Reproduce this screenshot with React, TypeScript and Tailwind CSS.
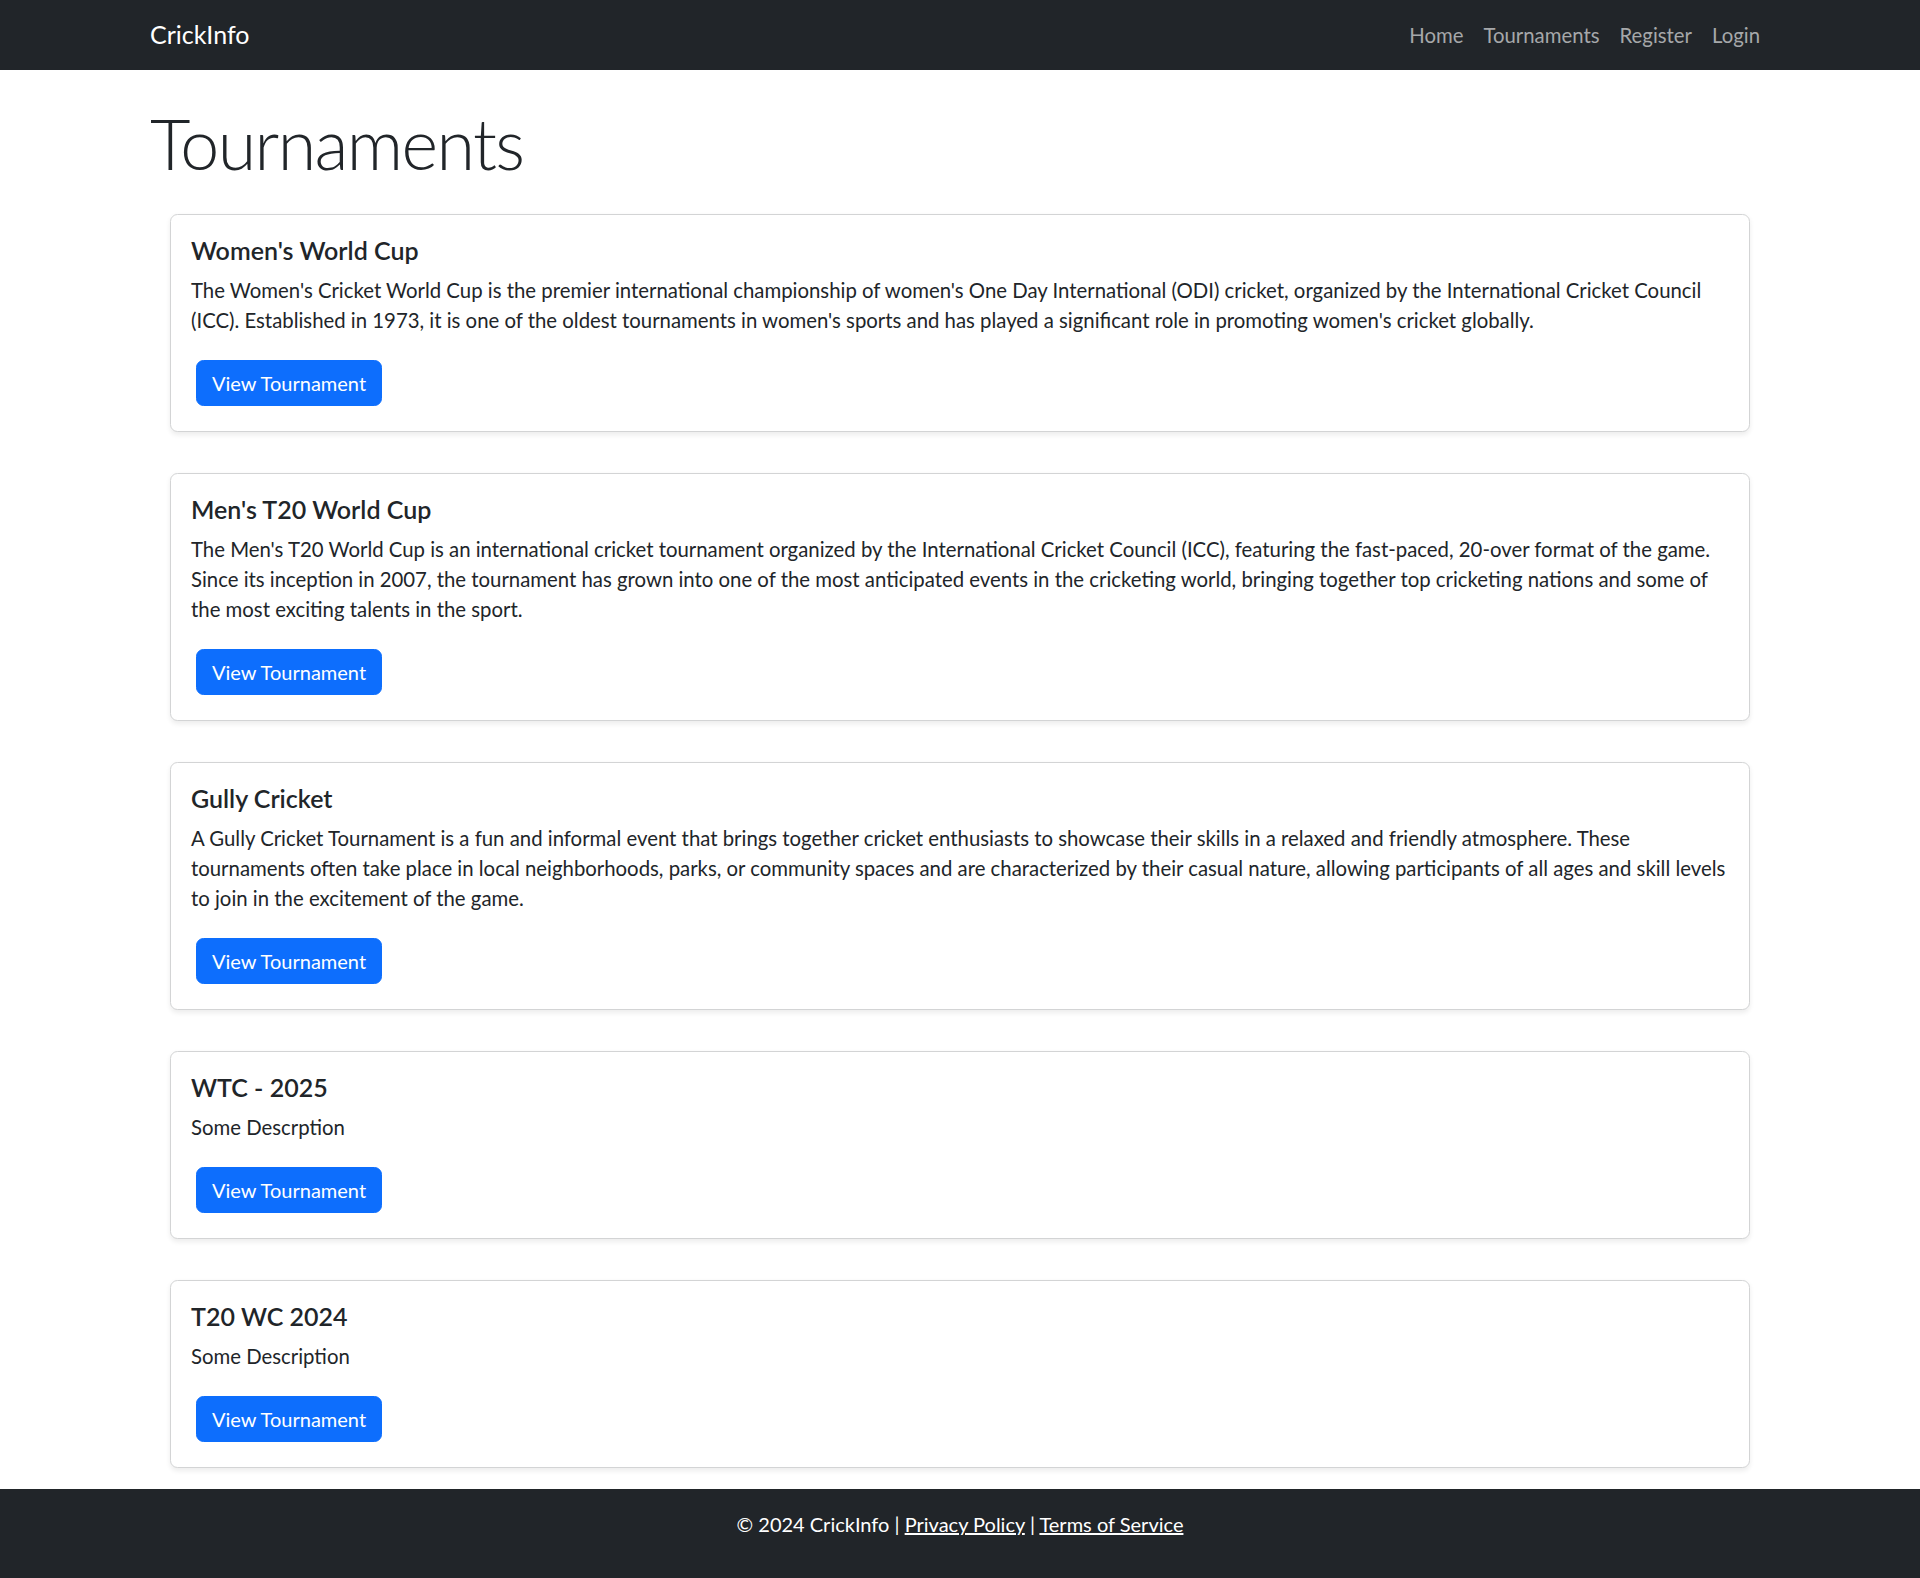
const tournaments = [
  {
    name: "Women's World Cup",
    description:
      "The Women's Cricket World Cup is the premier international championship of women's One Day International (ODI) cricket, organized by the International Cricket Council (ICC). Established in 1973, it is one of the oldest tournaments in women's sports and has played a significant role in promoting women's cricket globally.",
  },
  {
    name: "Men's T20 World Cup",
    description:
      "The Men's T20 World Cup is an international cricket tournament organized by the International Cricket Council (ICC), featuring the fast-paced, 20-over format of the game. Since its inception in 2007, the tournament has grown into one of the most anticipated events in the cricketing world, bringing together top cricketing nations and some of the most exciting talents in the sport.",
  },
  {
    name: 'Gully Cricket',
    description:
      'A Gully Cricket Tournament is a fun and informal event that brings together cricket enthusiasts to showcase their skills in a relaxed and friendly atmosphere. These tournaments often take place in local neighborhoods, parks, or community spaces and are characterized by their casual nature, allowing participants of all ages and skill levels to join in the excitement of the game.',
  },
  { name: 'WTC - 2025', description: 'Some Descrption' },
  { name: 'T20 WC 2024', description: 'Some Description' },
];

const navLinks = ['Home', 'Tournaments', 'Register', 'Login'];

const TournamentCard = ({ name, description }: { name: string; description: string }) => (
  <div className="bg-white border border-[#d3d4d5] rounded-[7.5px] shadow-[0_2.5px_5px_rgba(0,0,0,0.075)]">
    <div className="p-[20px]">
      <h5 className="text-[25px] leading-[30px] font-semibold mb-[10px]">{name}</h5>
      <p className="text-[20.35px] leading-[30px] mb-[20px]">{description}</p>
      <button className="m-[5px] bg-[#0d6efd] text-white text-[20px] leading-[30px] px-[15px] py-[7px] border border-[#0d6efd] rounded-[7.5px]">
        View Tournament
      </button>
    </div>
  </div>
);

export default function App() {
  return (
    <div className="min-h-screen flex flex-col bg-white text-[#212529] font-['Lato','Segoe_UI','Liberation_Sans',sans-serif]">
      <nav className="bg-[#212529] h-[70px]">
        <div className="w-[1650px] mx-auto px-[15px] h-full flex items-center justify-between">
          <a className="text-white text-[25px] leading-[37.5px]">CrickInfo</a>
          <ul className="flex">
            {navLinks.map((link) => (
              <li key={link}>
                <a className="block px-[10px] py-[10px] text-[20.35px] leading-[30px] text-[#a6a8aa]">{link}</a>
              </li>
            ))}
          </ul>
        </div>
      </nav>

      <main className="w-[1650px] mx-auto px-[15px] pt-[31px]">
        <h1 className="text-[70px] leading-[84px] font-light tracking-[-1.6px] mb-[29px]">Tournaments</h1>
        <div className="px-[20px] flex flex-col gap-[41px] pb-[21px]">
          {tournaments.map((t) => (
            <TournamentCard key={t.name} name={t.name} description={t.description} />
          ))}
        </div>
      </main>

      <footer className="bg-[#212529] text-white text-center pt-[20px] pb-[39px] mt-auto">
        <p className="text-[20px] leading-[30px]">
          © 2024 CrickInfo | <a className="underline">Privacy Policy</a> | <a className="underline">Terms of Service</a>
        </p>
      </footer>
    </div>
  );
}
